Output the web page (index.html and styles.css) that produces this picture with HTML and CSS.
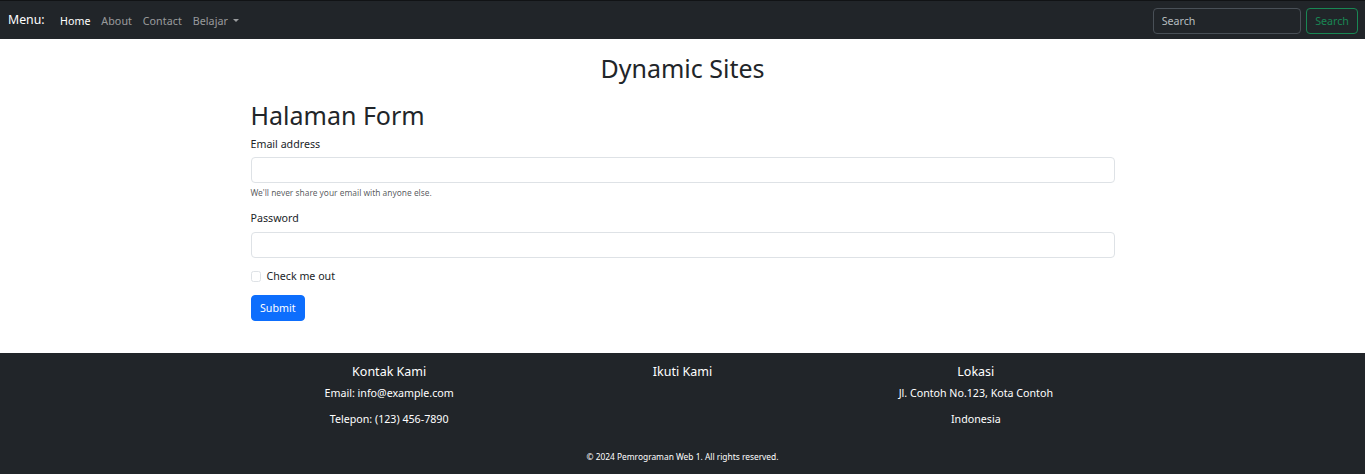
FILE: index.html
```html
<!DOCTYPE html>
<html lang="id">
<head>
<meta charset="utf-8">
<title>Dynamic Sites</title>
<link rel="stylesheet" href="styles.css">
</head>
<body>
<nav class="navbar">
  <div class="nav-left">
    <span class="brand">Menu:</span>
    <ul class="nav-links">
      <li><a class="nav-link active" href="#">Home</a></li>
      <li><a class="nav-link" href="#">About</a></li>
      <li><a class="nav-link" href="#">Contact</a></li>
      <li><a class="nav-link dropdown" href="#">Belajar<span class="caret"></span></a></li>
    </ul>
  </div>
  <form class="search">
    <input class="search-input" type="search" placeholder="Search">
    <button class="search-btn" type="button">Search</button>
  </form>
</nav>

<main class="main">
  <h1 class="site-title">Dynamic Sites</h1>
  <div class="content">
    <h1 class="page-title">Halaman Form</h1>
    <form class="form">
      <div class="group">
        <label class="label">Email address</label>
        <input class="control" type="email">
        <div class="help">We'll never share your email with anyone else.</div>
      </div>
      <div class="group">
        <label class="label">Password</label>
        <input class="control" type="password">
      </div>
      <div class="group check">
        <span class="checkbox"></span>
        <label class="check-label">Check me out</label>
      </div>
      <button class="submit" type="button">Submit</button>
    </form>
  </div>
</main>

<footer class="footer">
  <div class="footer-row">
    <div class="footer-col">
      <h5 class="footer-title">Kontak Kami</h5>
      <p class="footer-text">Email: info@example.com</p>
      <p class="footer-text">Telepon: (123) 456-7890</p>
    </div>
    <div class="footer-col">
      <h5 class="footer-title">Ikuti Kami</h5>
    </div>
    <div class="footer-col">
      <h5 class="footer-title">Lokasi</h5>
      <p class="footer-text">Jl. Contoh No.123, Kota Contoh</p>
      <p class="footer-text">Indonesia</p>
    </div>
  </div>
  <p class="copyright">© 2024 Pemrograman Web 1. All rights reserved.</p>
</footer>
</body>
</html>
```

FILE: styles.css
```css
* { box-sizing: border-box; }

html, body {
  margin: 0;
  padding: 0;
}

body {
  font-family: "Noto Sans", "Open Sans", sans-serif;
  font-size: 10.67px;
  line-height: 1.5;
  color: #212529;
  background: #fff;
}

.navbar {
  display: flex;
  justify-content: space-between;
  align-items: center;
  height: 39px;
  padding: 1px 7px 0 8px;
  background: #212529;
  border-top: 1px solid #111315;
}

.nav-left {
  display: flex;
  align-items: center;
}

.brand {
  color: #fff;
  font-size: 12.3px;
  margin-right: 10px;
}

.nav-links {
  display: flex;
  list-style: none;
  margin: 0;
  padding: 0;
}

.nav-link {
  display: inline-flex;
  align-items: center;
  padding: 5.33px;
  color: rgba(255, 255, 255, 0.55);
  text-decoration: none;
  letter-spacing: 0.1px;
}

.nav-link.active {
  color: #fff;
}

.caret {
  display: inline-block;
  margin-left: 5px;
  width: 0;
  height: 0;
  border-top: 3.5px solid rgba(255, 255, 255, 0.55);
  border-left: 3.5px solid transparent;
  border-right: 3.5px solid transparent;
}

.search {
  display: flex;
  align-items: center;
  gap: 5.33px;
}

.search-input {
  width: 148px;
  height: 26px;
  padding: 4px 8px;
  font: inherit;
  color: #dee2e6;
  background: #212529;
  border: 1px solid #495057;
  border-radius: 4px;
  outline: none;
}

.search-input::placeholder {
  color: rgba(222, 226, 230, 0.8);
}

.search-btn {
  width: 52px;
  height: 26px;
  padding: 0;
  font: inherit;
  color: #198754;
  background: transparent;
  border: 1px solid #198754;
  border-radius: 4px;
}

.main {
  padding-top: 13px;
}

.site-title {
  margin: 0 0 14.5px;
  font-size: 25px;
  font-weight: 400;
  line-height: 32px;
  text-align: center;
}

.content {
  width: 864px;
  margin: 0 auto;
}

.page-title {
  margin: 0 0 5.33px;
  font-size: 25px;
  font-weight: 400;
  line-height: 32px;
}

.form {
  display: flex;
  flex-direction: column;
  align-items: flex-start;
}

.group {
  width: 100%;
  margin-bottom: 10.67px;
}

.label {
  display: block;
  margin-bottom: 5.33px;
}

.control {
  display: block;
  width: 100%;
  height: 26px;
  padding: 4px 8px;
  font: inherit;
  background: #fff;
  border: 1px solid #dee2e6;
  border-radius: 4px;
}

.help {
  margin-top: 2.67px;
  font-size: 8.4px;
  line-height: 14px;
  color: rgba(33, 37, 41, 0.75);
}

.check {
  display: flex;
  align-items: center;
  min-height: 16px;
}

.checkbox {
  width: 10.67px;
  height: 10.67px;
  border: 1px solid #dee2e6;
  border-radius: 2.5px;
  margin-right: 5.33px;
}

.submit {
  height: 26px;
  padding: 0 8.5px;
  font: inherit;
  color: #fff;
  background: #0d6efd;
  border: 1px solid #0d6efd;
  border-radius: 4px;
}

.footer {
  margin-top: 31.5px;
  padding: 11.5px 0 12px;
  background: #212529;
  color: #fff;
}

.footer-row {
  display: grid;
  grid-template-columns: repeat(3, 1fr);
  width: 880px;
  margin: 0 auto;
}

.footer-col {
  padding: 0 8px;
  text-align: center;
}

.footer-title {
  margin: 0 0 4.5px;
  font-size: 12.5px;
  font-weight: 400;
  line-height: 16px;
}

.footer-text {
  margin: 0 0 10.67px;
  line-height: 16px;
}

.copyright {
  margin: 11.5px 0 0;
  font-size: 8.4px;
  line-height: 16px;
  text-align: center;
}
```
